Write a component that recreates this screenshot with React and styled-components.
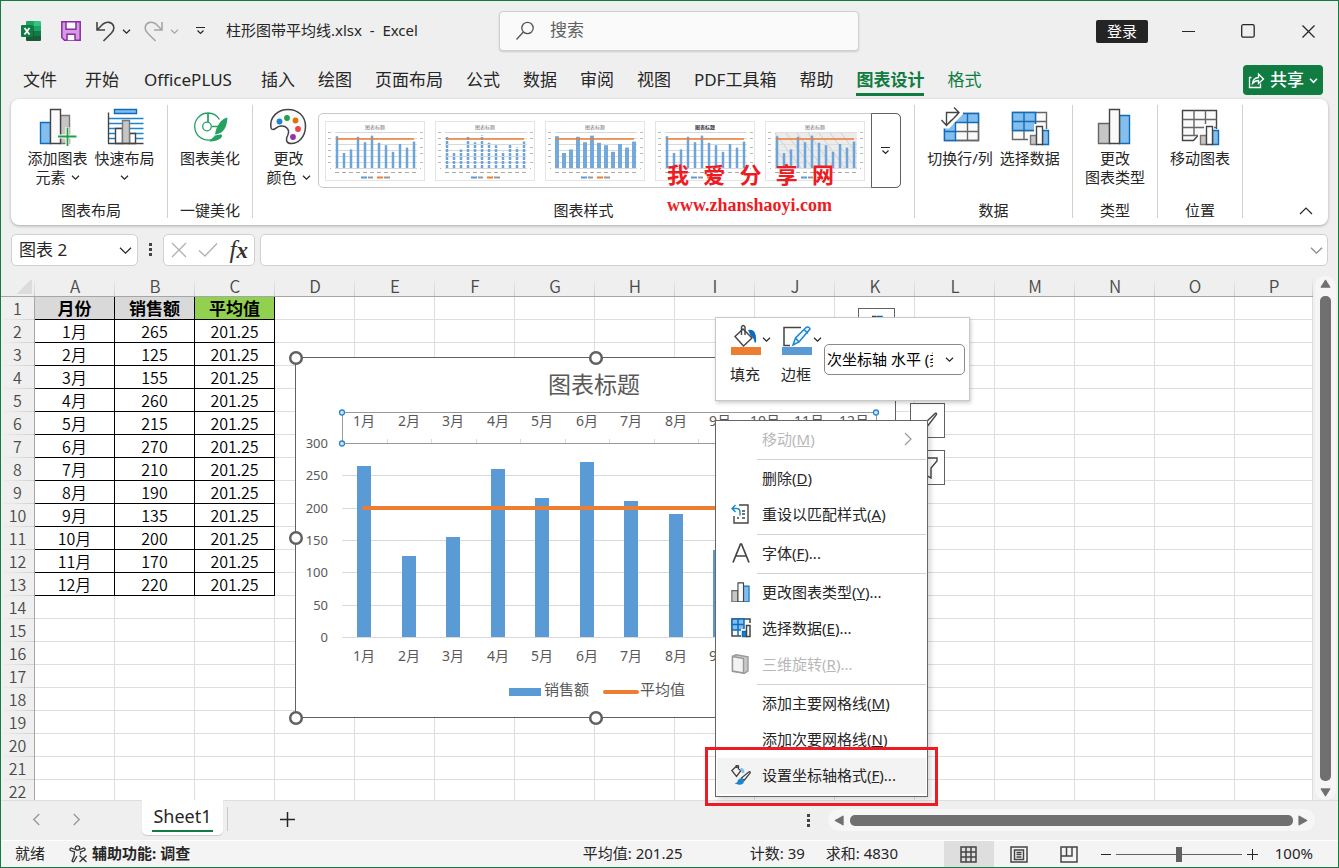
import React from "react";
import styled, { createGlobalStyle, css } from "styled-components";

const GREEN = "#107c41";
const INK = "#262626";
const BLUE = "#5b9bd5";
const ORANGE = "#ed7d31";

const Global = createGlobalStyle`
  *, *::before, *::after { box-sizing: border-box; }
  body { margin: 0; color: ${INK}; font: 15px/19px "Noto Sans", "Noto Sans CJK SC", sans-serif; }
  button, input, select { font: inherit; color: inherit; margin: 0; padding: 0; border: 0; background: none; }
  button { white-space: nowrap; }
  svg { display: block; flex: none; }
`;

const Window = styled.div`
  display: flex;
  flex-direction: column;
  height: 100vh;
  overflow: hidden;
  border: 1px solid ${GREEN};
  background: #efefef;
`;

/* ---------- Title bar ---------- */
const TitleBar = styled.header`
  display: grid;
  grid-template-columns: 498px minmax(200px, 360px) 1fr;
  align-items: center;
  height: 60px;
`;
const QuickAccess = styled.div`
  display: flex;
  align-items: center;
  padding-left: 20px;
`;
const QuickButton = styled.button`
  display: flex;
  align-items: center;
  height: 24px;
  margin-right: ${(p) => p.$after || 0}px;
`;
const FileName = styled.span`
  padding-bottom: 2px;
`;
const SearchBox = styled.label`
  display: flex;
  align-items: center;
  gap: 15px;
  height: 40px;
  padding: 0 15px;
  border: 1px solid #d0d0d0;
  border-radius: 4px;
  background: #fafafa;
  box-shadow: 0 1px 2px #00000026;
  input { flex: 1; min-width: 0; padding-bottom: 3px; font-size: 17px; outline: 0; }
  input::placeholder { color: #616161; opacity: 1; }
`;
const WindowControls = styled.div`
  display: flex;
  align-items: center;
  justify-content: flex-end;
`;
const SignIn = styled.button`
  width: 52px;
  height: 23px;
  margin-right: 10px;
  border-radius: 2px;
  background: #242424;
  color: #fff;
`;
const ControlButton = styled.button`
  display: grid;
  place-items: center;
  width: 60px;
  height: 40px;
`;

/* ---------- Ribbon ---------- */
const TabBar = styled.nav`
  display: flex;
  align-items: center;
  height: 38px;
  padding: 0 15px 0 22px;
`;
const Tab = styled.button`
  height: 31px;
  margin-right: 23px;
  padding-top: 2px;
  border-bottom: 3px solid ${(p) => (p.$active ? GREEN : "transparent")};
  font-size: 17px;
  line-height: 26px;
  color: ${(p) => (p.$chart ? GREEN : INK)};
  font-weight: ${(p) => (p.$active ? 700 : 400)};
`;
const FileTab = styled(Tab)`
  margin-right: 28px;
`;
const AddInTab = styled(Tab)`
  margin-right: 27px;
  padding: 2px 2px 0;
`;
const Share = styled.button`
  display: flex;
  align-items: center;
  justify-content: space-between;
  width: 80px;
  height: 30px;
  margin-left: auto;
  padding: 0 5px;
  border-radius: 4px;
  background: ${GREEN};
  color: #fff;
  font-size: 17px;
  font-weight: 500;
  line-height: 28px;
`;
const Ribbon = styled.section`
  display: flex;
  flex: none;
  height: 126px;
  margin: 0 10px;
  padding: 6px 0 7px;
  border-radius: 8px;
  background: #fff;
  box-shadow: 0 1px 3px #0000004d;
`;
const Group = styled.div`
  display: flex;
  flex-direction: column;
  flex: none;
  width: ${(p) => p.$w}px;
  padding-left: ${(p) => p.$inset || 0}px;
  border-right: 1px solid #d1d1d1;
`;
const GroupBody = styled.div`
  display: flex;
  flex: 1;
  justify-content: center;
  align-items: flex-start;
  gap: 1px;
  padding-top: 2px;
`;
const GroupLabel = styled.div`
  height: 17px;
  text-align: center;
`;
const BigButton = styled.button`
  display: flex;
  flex-direction: column;
  align-items: center;
  padding: 0 3px;
  svg + span { margin-top: 2px; }
  span { display: flex; align-items: center; gap: 5px; height: 19px; }
`;
const RibbonEnd = styled.div`
  display: flex;
  flex: 1;
  justify-content: flex-end;
  align-items: flex-end;
  padding: 0 15px 0;
`;
const Gallery = styled.div`
  display: flex;
  align-items: center;
  height: 75px;
  margin: 6px 3px 0 3px;
  padding-left: 6px;
  gap: 10px;
  border: 1px solid #c8c8c8;
  border-radius: 5px;
`;
const Thumb = styled.button`
  width: 100px;
  height: 60px;
  border: 1px solid #e4e4e4;
`;
const GalleryMore = styled.button`
  display: grid;
  place-items: center;
  width: 30px;
  height: 75px;
  margin: 0 -1px 0 -4px;
  border: 1px solid #616161;
  border-radius: 0 5px 5px 0;
`;
const Watermark = styled.div`
  position: absolute;
  left: 667px;
  top: 161px;
  width: 167px;
  color: #ed1c24;
  font-weight: 700;
  div { display: flex; justify-content: space-between; font-size: 22px; line-height: 26px; }
  p { margin: 8px 0 0; font: 700 18px/20px "Liberation Serif", serif; }
`;

/* ---------- Formula bar ---------- */
const FormulaBar = styled.div`
  display: flex;
  flex: none;
  height: 32px;
  margin: 9px 10px 10px;
`;
const Field = styled.div`
  display: flex;
  align-items: center;
  border: 1px solid #d0d0d0;
  border-radius: 5px;
  background: #fff;
  input { flex: 1; min-width: 0; height: 100%; padding: 0 7px 3px; font-size: 17px; outline: 0; }
`;
const NameBox = styled(Field)`
  width: 127px;
  padding-right: 5px;
`;
const FormulaTools = styled(Field)`
  width: 92px;
  justify-content: space-between;
  padding: 0 6px 0 7px;
`;
const FormulaInput = styled(Field)`
  flex: 1;
  margin-left: 5px;
  padding-right: 4px;
`;
const Dots = styled.div`
  display: grid;
  place-items: center;
  width: 25px;
`;
const FxText = styled.span`
  font: italic 400 25px/24px "Liberation Serif", serif;
  color: #333;
  b { font-size: 23px; }
`;

/* ---------- Sheet ---------- */
const SheetArea = styled.main`
  position: relative;
  display: flex;
  flex: 1;
  min-height: 0;
`;
const GridClip = styled.div`
  flex: 1;
  min-width: 0;
  margin-top: -4px;
  padding-top: 4px;
  overflow: hidden;
`;
const Grid = styled.table`
  width: 100%;
  table-layout: fixed;
  border-collapse: separate;
  border-spacing: 0;
  font-family: "Noto Sans CJK SC", sans-serif;
  font-size: 16px;
  font-weight: 350;
  line-height: 20px;
  background: #fff;
  th { padding: 0 0 1px; font-weight: 350; color: #4a4a4a; background: #efefef; }
  thead th {
    height: 21px;
    padding: 0;
    font-size: 17px;
    border-bottom: 1px solid #a6a6a6;
    background: linear-gradient(#efefef, #d0d0d0) right / 1px 100% no-repeat #efefef;
  }
  tbody th {
    height: 23px;
    border-right: 1px solid #a6a6a6;
    background: linear-gradient(90deg, #efefef, #d0d0d0) bottom / 100% 1px no-repeat #efefef;
  }
  col:first-child { width: 34px; }
`;
const Column = styled.col`
  width: ${(p) => (p.$last ? "auto" : "80px")};
`;
const Cell = styled.td`
  height: 23px;
  padding: 0;
  border: solid #dedede;
  border-width: 0 1px 1px 0;
  text-align: center;
  ${(p) => p.$data && css`border-color: #000; color: #000;`}
  ${(p) => p.$head && css`background: ${p.$head}; font-weight: 700; font-size: 17px;`}
`;
const Corner = styled.div`
  width: 15px;
  height: 15px;
  margin: 0 3px 0 auto;
  background: linear-gradient(135deg, transparent 50%, #dcdcdc 50%);
`;
const VScroll = styled.div`
  display: flex;
  flex-direction: column;
  align-items: center;
  gap: 6px;
  width: 21px;
  margin: 0 2px;
  padding: 3px 0 2px;
  border-radius: 10px;
  background: #f6f6f6;
  i { flex: 1; width: 11px; border-radius: 5px; background: #707070; }
`;

/* ---------- Objects that float over the cells ---------- */
const ChartObject = styled.svg`
  position: absolute;
  left: 285px;
  top: 72px;
  text { font-family: "Noto Sans", "Noto Sans CJK SC", sans-serif; fill: #595959; }
`;
const SideButton = styled.button`
  position: absolute;
  left: ${(p) => p.$x}px;
  top: ${(p) => p.$y}px;
  display: grid;
  place-items: center;
  width: ${(p) => p.$w || 35}px;
  height: 35px;
  border: 1px solid #616161;
  background: #fff;
`;
const MiniToolbar = styled.div`
  position: absolute;
  left: 714px;
  top: 41px;
  display: flex;
  width: 255px;
  height: 84px;
  padding: 6px 4px 0 14px;
  border: 1px solid #c8c8c8;
  background: #fff;
  box-shadow: 1px 2px 4px #00000033;
`;
const ColorTool = styled.button`
  display: grid;
  grid-template-columns: 32px 19px;
  grid-template-rows: 31px 39px;
  width: 51px;
  height: 70px;
  align-items: center;
  text-align: left;
`;
const AxisSelect = styled.label`
  display: flex;
  align-items: center;
  width: 141px;
  height: 31px;
  margin: 20px 0 0 -8px;
  padding-right: 10px;
  border: 1px solid #8a8a8a;
  border-radius: 5px;
  select { flex: 1; min-width: 0; height: 27px; margin-right: 12px; padding-left: 2px; appearance: none; outline: 0; text-overflow: clip; color: #000; }
`;
const Menu = styled.div`
  position: absolute;
  left: 714px;
  top: 144px;
  width: 213px;
  padding: 1px 1px 2px;
  border: 1px solid #666;
  background: #fff;
  box-shadow: 3px 3px 5px #00000026;
`;
const MenuItem = styled.button`
  display: grid;
  grid-template-columns: 20px 1fr auto;
  align-items: center;
  gap: 11px;
  width: 100%;
  height: 36px;
  padding: 0 11px 2px 14px;
  text-align: left;
  color: ${(p) => (p.disabled ? "#b8b8b8" : "#262626")};
  background: ${(p) => (p.$hot ? "#f3f3f3" : "none")};
`;
const MenuRule = styled.hr`
  height: 1px;
  margin: 1px 0 1px 40px;
  border: 0;
  background: #d1d1d1;
`;
const Highlight = styled.div`
  position: absolute;
  left: 704px;
  top: 471px;
  width: 233px;
  height: 59px;
  border: 3px solid #ed1c24;
  pointer-events: none;
  z-index: 2;
`;

/* ---------- Sheet tabs and status bar ---------- */
const SheetBar = styled.div`
  display: flex;
  flex: none;
  height: 40px;
  border-top: 1px solid #dedede;
`;
const SheetNav = styled.div`
  display: flex;
  align-items: center;
  gap: 27px;
  width: 141px;
  padding: 0 0 2px 29px;
`;
const IconButton = styled.button`
  display: grid;
  place-items: center;
`;
const SheetTab = styled.button`
  width: 81px;
  height: 35px;
  margin-top: -1px;
  padding: 0 10px 2px;
  border-radius: 0 0 5px 5px;
  background: #fff;
  box-shadow: 0 1px 1px #00000026;
  font-size: 18px;
  line-height: 28px;
  span { display: block; border-bottom: 2px solid ${GREEN}; }
`;
const NewSheet = styled(IconButton)`
  width: 120px;
  height: 24px;
  margin: 6px auto 0 4px;
  border-left: 1px solid #c8c8c8;
`;
const HScroll = styled.div`
  display: flex;
  align-items: center;
  gap: 5px;
  flex: 0 1 487px;
  height: 22px;
  margin: 8px 23px 0 7px;
  padding: 0 6px;
  border-radius: 11px;
  background: #f6f6f6;
  i { flex: 1; height: 11px; border-radius: 5px; background: #707070; }
`;
const StatusBar = styled.footer`
  display: flex;
  flex: none;
  align-items: center;
  height: 27px;
  padding: 0 25px 0 14px;
  border-top: 1px solid #fff;
  background: #f4f4f4;
`;
const StatusText = styled.span`
  flex: none;
  width: ${(p) => (p.$w ? `${p.$w}px` : "auto")};
  padding-bottom: 2px;
`;
const A11y = styled.button`
  display: flex;
  align-items: center;
  gap: 4px;
  margin: 0 auto 0 24px;
  font-weight: 700;
`;
const ViewButton = styled(IconButton)`
  width: 50px;
  height: 26px;
  background: ${(p) => (p.$on ? "#dedede" : "none")};
`;
const Zoom = styled.div`
  display: flex;
  align-items: center;
  gap: 5px;
  margin: 0 17px 0 6px;
  input { width: 126px; height: 20px; appearance: none; background: linear-gradient(#616161, #616161) center / 100% 1px no-repeat; }
  input::-webkit-slider-thumb { appearance: none; width: 6px; height: 15px; background: #616161; }
`;

/* ---------- Icons ---------- */
const Chevron = ({ s = 7, c = INK, w = 1.2, dir = "down" }) => {
  const turn = { down: 0, left: 90, up: 180, right: 270 }[dir];
  const h = s / 2;
  return (
    <svg width={s + 2} height={s + 2} viewBox={`${-h - 1} ${-h - 1} ${s + 2} ${s + 2}`} fill="none" stroke={c} strokeWidth={w}>
      <path transform={`rotate(${turn})`} d={`M${-h} ${-h / 2}L0 ${h / 2}L${h} ${-h / 2}`} />
    </svg>
  );
};
const MoreIcon = () => (
  <svg width="11" height="10" viewBox="0 0 11 10" fill="none" stroke={INK} strokeWidth="1.2"><path d="M1 1.500h9M2.500 4.500l3 3 3-3" /></svg>
);
const Arrow = ({ dir }) => {
  const d = { up: "M6 1L11 9H1z", down: "M6 10L11 2H1z", left: "M1 6L10 1V11z", right: "M10 6L1 1V11z" }[dir];
  return <svg width="11" height="11" viewBox="0 0 12 12"><path d={d} fill="#707070" stroke="#707070" strokeLinejoin="round" /></svg>;
};
const DotsIcon = () => (
  <svg width="4" height="16" viewBox="0 0 4 16" fill="#444"><path d="M0 1h3v3H0zM0 6h3v3H0zM0 11h3v3H0z" /></svg>
);
const ExcelIcon = () => (
  <svg width="20" height="20" viewBox="0 0 20 20">
    <path d="M6 0h7v5H5V1q0-1 1-1" fill="#21a366" /><path d="M13 0h6q1 0 1 1v4h-7z" fill="#33c481" />
    <path d="M5 5h8v5H5z" fill="#107c41" /><path d="M13 5h7v5h-7z" fill="#21a366" />
    <path d="M5 10h8v5H5z" fill="#185c37" /><path d="M13 10h7v5h-7z" fill="#107c41" />
    <path d="M5 15h15v4q0 1-1 1H6q-1 0-1-1z" fill="#185c37" />
    <rect y="4" width="12" height="12" rx="1" fill="#107c41" />
    <path d="M3.500 7l5 6.500M8.500 7l-5 6.500" stroke="#fff" strokeWidth="1.800" />
  </svg>
);
const SaveIcon = () => (
  <svg width="20" height="20" viewBox="0 0 20 20" stroke="#8a2da5" strokeWidth="1.500">
    <path d="M.8.8h18.400v18.400H3.500L.8 16.500z" fill="#d59ae0" /><path d="M5 .8h10v7.400H5z" fill="#fafafa" /><path d="M6 19.200v-6h8v6" fill="#fafafa" />
  </svg>
);
const UndoIcon = ({ c = "#444", flip }) => (
  <svg width="19" height="21" viewBox="0 0 19 21" fill="none" stroke={c} strokeWidth="1.600">
    <path transform={flip ? "matrix(-1 0 0 1 19 0)" : undefined} d="M1 1v8h8M1.300 8.700L7 3C11 0 16 1 17.500 5c1 3 0 5-2 7L7.500 20" />
  </svg>
);
const SearchIcon = () => (
  <svg width="20" height="20" viewBox="0 0 20 20" fill="none" stroke="#555" strokeWidth="1.300"><circle cx="12.500" cy="7" r="5.700" /><path d="M8.300 11L1.500 18.500" /></svg>
);
const Bars = ({ x, y }) => (
  <g transform={`translate(${x} ${y})`} strokeWidth="1.400">
    <path d="M-2 20V8h6V-2h10V3h6v17" fill="#fff" stroke="none" />
    <path d="M.5 9.500h6v9h-6z" fill="#c8c6c4" stroke="#777" /><path d="M12.500 4.500h6v14h-6z" fill="#83beec" stroke="#0f6cbd" /><path d="M6.500.5h6v18h-6z" fill="#fff" stroke="#444" />
  </g>
);
const AddElementIcon = () => (
  <svg width="40" height="40" viewBox="0 0 40 40" strokeWidth="1.400">
    <path d="M3.500 15.500h10v21h-10z" fill="#83beec" stroke="#0f6cbd" /><path d="M23.500 8.500h9v28h-9z" fill="#c8c6c4" stroke="#777" />
    <path d="M13.500 2.500h10v34h-10z" fill="#fafafa" stroke="#444" /><path d="M21 29.500h19M30.500 20v19" stroke="#fff" strokeWidth="4" />
    <path d="M21 29.500h18.500M30.500 20.500v18.500" stroke="#23a045" strokeWidth="1.800" />
  </svg>
);
const QuickLayoutIcon = () => (
  <svg width="40" height="40" viewBox="0 0 40 40" strokeWidth="1.400">
    <path d="M4 11.500h34.500M4 16.500h34.500M4 21.500h34.500M4 26.500h34.500M4 31.500h34.500" stroke="#1a86d0" />
    <path d="M9.500 2.500h22v4h-22z" fill="#83beec" stroke="#0f6cbd" /><path d="M3.500 5.500v31" stroke="#444" />
    <path d="M10.500 21.500h7v15h-7zM24.500 26.500h6v10h-6z" fill="#fff" stroke="#444" /><path d="M17.500 13.500h7v23h-7z" fill="#c8c6c4" stroke="#777" /><path d="M3 36.500h35.500" stroke="#444" />
  </svg>
);
const BeautifyIcon = () => (
  <svg width="40" height="40" viewBox="0 0 40 40" fill="none" stroke="#25a162" strokeWidth="1.300">
    <path d="M18 6A13.500 13.500 0 1 0 22.500 32.300M18 15V6A13.500 13.500 0 0 1 29.500 12.500M22 19.500h7" />
    <circle cx="17" cy="19.500" r="4.300" />
    <path d="M18 6v9" />
    <path d="M37.500 10.500C31 12 26 19 25 28c4-1 9-3 11-9 1-3 1-5 1.500-8.500zM24.500 29L19 34.500c5 0 11-1 13-5 1-3-4-3-8-.5z" fill="#25a162" stroke="none" />
    <path d="M25 28L30 27" stroke="#fff" strokeWidth=".8" />
  </svg>
);
const PaletteIcon = () => (
  <svg width="40" height="40" viewBox="0 0 40 40">
    <path d="M3 21C1 10 10 2.500 20 2.500S37.500 9 37.500 19.500 30 36.500 23.500 36.500c-6.500 0-5.500-5-3.500-9 2-5-2-9-7-8.500-5 .5-5 3.500-8 3.500Q3.200 22.500 3 21z" fill="#fafafa" stroke="#444" strokeWidth="1.500" />
    <circle cx="11.500" cy="14.500" r="2.900" fill="#1a86d0" /><circle cx="19" cy="11" r="2.900" fill="#23a045" /><circle cx="27.500" cy="13.500" r="2.900" fill="#e07000" /><circle cx="30" cy="22" r="2.900" fill="#f0403f" /><circle cx="25" cy="30" r="2.900" fill="#9232a8" />
  </svg>
);
const SwitchIcon = () => (
  <svg width="40" height="40" viewBox="0 0 40 40" strokeWidth="1.400">
    <path d="M4.500 6.500h34v27h-34z" fill="#fafafa" stroke="#666" /><path d="M15.500 6.500h23v9h-23zM4.500 15.500h11v18h-11z" fill="#83beec" />
    <path d="M15.500 24.500h23M27.500 15.500v18M38.500 15.500v18h-23" stroke="#666" fill="none" />
    <path d="M15.500 15.500V6.500h23v9h-34v18h11v-18M27.500 6.500v9M4.500 24.500h11" fill="none" stroke="#0f6cbd" />
    <path d="M0 0h23v7L9 21.500H0z" fill="#fff" /><path d="M6.500 18V5.500h12M1.500 13l5 5.500 5-5.500M14 .5l5 5-5 5.500M8.500 16.500L17.500 7.500" fill="none" stroke="#444" />
  </svg>
);
const SelectDataIcon = () => (
  <svg width="40" height="40" viewBox="0 0 40 40" strokeWidth="1.400">
    <path d="M2.500 5.500h34v27h-34zM2.500 23.500h34M25.500 14.500h11M14 23v9.500M25.500 5.500v27" fill="#fafafa" stroke="#666" />
    <path d="M2.500 5.500h23v18h-23zM2.500 14.500h23M14 5.500v18" fill="#83beec" stroke="#0f6cbd" /><Bars x={20} y={19} />
  </svg>
);
const ChartTypeIcon = ({ size = 40 }) => (
  <svg width={size} height={size} viewBox={size === 40 ? "0 0 40 40" : "2 1 36 36"} strokeWidth={size === 40 ? 1.4 : 2}>
    <path d="M3.500 16.500h11v20h-11z" fill="#c8c6c4" stroke="#666" /><path d="M24.500 8.500h10v28h-10z" fill="#83beec" stroke="#0f6cbd" /><path d="M14.500 2.500h10v34h-10z" fill="#fafafa" stroke="#444" />
  </svg>
);
const MoveIcon = () => (
  <svg width="40" height="40" viewBox="0 0 40 40" fill="#fafafa" stroke="#444" strokeWidth="1.400">
    <path d="M2.500 3.500h34v25H18l-4.500 5h-11z" /><path d="M2.500 12.500h34M2.500 20.500h34M2.500 28.500h16M14 3.500v25M25.500 3.500v25" stroke="#666" /><Bars x={20} y={19} />
  </svg>
);
const BucketIcon = () => (
  <svg width="32" height="31" viewBox="0 0 32 31" fill="none" stroke="#444" strokeWidth="1.400">
    <path d="M5 12.500L13 5l9 9-8.500 8z" fill="#fff" /><path d="M11.500 11V3q1.500-3 3.500 0v8" /><path d="M18 6q9-2 8 12.500h-1.500q-.5-5-3.500-6z" fill="#0f6cbd" stroke="none" />
    <path d="M1 23h30v8H1z" fill={ORANGE} stroke="none" />
  </svg>
);
const OutlineIcon = () => (
  <svg width="32" height="31" viewBox="0 0 32 31" fill="none" stroke="#444" strokeWidth="1.500">
    <path d="M20 3.500H3v18h6" /><path d="M12 21l2.500-7L25 3.500q3-1.500 4 1.500L18 18zM14.500 14l3.500 4M23 5.500l4 4" stroke="#1a86d0" fill="#eaf5fd" />
    <path d="M1 23h30v8H1z" fill={BLUE} stroke="none" />
  </svg>
);
const ResetIcon = () => (
  <svg width="20" height="21" viewBox="0 0 20 21" fill="none" stroke="#444" strokeWidth="1.400"><path d="M8 1h9v18H3v-7M6 14h2M11 10h3M11 14h3M11 7h3" /><path d="M4.500 1L1 4.500 4.500 8M1 4.500h5q3 0 3 4v3" stroke="#1a86d0" /></svg>
);
const SmallDataIcon = () => (
  <svg width="20" height="20" viewBox="0 0 20 20" fill="#fafafa" stroke="#444" strokeWidth="1.500">
    <path d="M1 1h18v17H1z" /><path d="M1 1h12v11H1zM1 6.500h12M7 1v17" fill="#83beec" stroke="#0f6cbd" /><path d="M10 20V11h4V5h6v15z" fill="#fff" stroke="none" /><path d="M11.500 13.500h4v5h-4z" fill="#1a86d0" stroke="#0f6cbd" /><path d="M15.500 7.500h3.500v11h-3.500z" />
  </svg>
);
const RotateIcon = () => (
  <svg width="20" height="20" viewBox="0 0 20 20" stroke="#999" strokeWidth="1.400"><path d="M1.500 2.500L5 .8l12 2v14l-3.500 2.500-12-2z" fill="#c8c8c8" /><path d="M1.500 2.500l11 2v14.500l-11-2z" fill="#f3f3f3" /></svg>
);
const FontIcon = () => (
  <svg width="20" height="20" viewBox="0 0 20 20" fill="none" stroke="#444" strokeWidth="1.700"><path d="M2 19.500L9.500 1h1L18 19.500M4.500 13h11" /></svg>
);
const FormatIcon = () => (
  <svg width="20" height="20" viewBox="0 0 20 20" fill="none" stroke="#444" strokeWidth="1.300"><path d="M.8 5.500L5.500 1.200l4.300 4.500L5.500 11.500zM5 3V1q1.500-1.500 2.500 0v3.500" /><path d="M9.500 4q3 .5 2.500 4" stroke="#83beec" strokeWidth="2.500" /><path d="M10.500 13l7.500-6.200q1.800-.3 1 1.400L13 15.500z" fill="#fafafa" /><path d="M3.500 18.500q3-.5 3.500-3.500 3-3.500 6 0 .5 5-5 4.800z" fill="#1a86d0" stroke="none" /></svg>
);
const A11yIcon = () => (
  <svg width="19" height="18" viewBox="0 0 19 18" fill="none" stroke="#333" strokeWidth="1.300"><circle cx="8.500" cy="3" r="2.200" /><path d="M6 4.500L2 3Q0 4 1.500 5.500L5.500 7 5 11l-2 5q1 1.500 2.200 0L8 11M11 4.500L15 3q2 1 .5 2.500L11.500 7v2.500M10.500 10.500l7 6.500M17.500 10.500l-7 6.500" /></svg>
);

/* ---------- Charts ---------- */
const SALES = [265, 125, 155, 260, 215, 270, 210, 190, 135, 200, 170, 220];
const MONTHS = SALES.map((_, i) => `${i + 1}月`);

const ThumbChart = ({ wide, dashed, hatch, bold }) => (
  <svg width="98" height="58" viewBox="0 0 98 58">
    {hatch && <path d="M9 11h82v35H9z" fill="#ececec" />}
    {hatch && <path d="M9 26l15 20M9 11l26 35M20 11l26 35M31 11l26 35M42 11l26 35M53 11l26 35M64 11l26 35M75 11l16 21" stroke="#cfcfcf" />}
    <path d="M9 10.500h82M9 16.500h82M9 22.500h82M9 28.500h82M9 34.500h82M9 40.500h82M9 46.500h82" stroke={hatch ? "#ddd" : "#d8d8d8"} />
    <path d="M2 10.500h3M2 16.500h3M2 22.500h3M2 28.500h3M2 34.500h3M2 40.500h3M4 46.500h1M94 10.500h3M94 16.500h3M94 25.500h3M94 31.500h3M94 40.500h3M94 46.500h1" stroke="#b8b8b8" />
    <text x="49" y="7" fontSize="5" textAnchor="middle" fill={bold ? "#334" : "#777"} fontWeight={bold ? 700 : 400}>图表标题</text>
    {SALES.map((v, i) => (
      <path key={i} d={`M${11 + i * 7} 46V${46 - v * 0.12}`} stroke={wide ? "#74a9db" : "#6ba5dc"} strokeWidth={wide ? 4 : 2.5} strokeDasharray={dashed ? "3 1" : undefined} />
    ))}
    <path d="M9 50.500h82" stroke="#aaa" strokeDasharray="4 3" />
    <path d="M10 17h78" stroke={ORANGE} strokeWidth="1.800" opacity=".75" />
    <path d="M35 55.500h6" stroke={BLUE} strokeWidth="2" /><path d="M51 55.500h6" stroke={ORANGE} strokeWidth="2" /><path d="M42 55.500h5M58 55.500h6" stroke="#999" strokeWidth="2" />
  </svg>
);

const AXIS = { left: 56, right: 590, top: 95, bottom: 289 };
const STEP = (AXIS.right - AXIS.left) / 12;
const yOf = (v) => Math.round(AXIS.bottom - (v * (AXIS.bottom - AXIS.top)) / 300);
const xOf = (i) => Math.round(AXIS.left + STEP * (i + 0.5));

const MainChart = () => (
  <ChartObject width="620" height="380" viewBox="0 0 620 380" role="img" aria-label="图表标题">
    <path d="M9.500 9.500h600v360h-600z" fill="#fff" stroke="#616161" />
    <text x="308" y="45" fontSize="23" textAnchor="middle">图表标题</text>
    {[0, 50, 100, 150, 200, 250, 300].map((v) => (
      <g key={v}>
        <path d={`M${AXIS.left} ${yOf(v) + 0.5}H${AXIS.right}`} stroke="#d9d9d9" />
        <text x="42" y={yOf(v) + 5} fontSize="13" textAnchor="end">{v}</text>
      </g>
    ))}
    {SALES.map((v, i) => <rect key={i} x={xOf(i) - 7} y={yOf(v)} width="14" height={AXIS.bottom - yOf(v)} fill={BLUE} />)}
    <path d={`M${xOf(0)} 160H${xOf(11)}`} stroke={ORANGE} strokeWidth="4" strokeLinecap="round" />
    {MONTHS.map((m, i) => (
      <g key={m} fontSize="14" textAnchor="middle">
        <text x={xOf(i)} y="78">{m}</text>
        <text x={xOf(i)} y="313">{m}</text>
        <path d={`M${Math.round(AXIS.left + STEP * i) + 0.5} 91v4`} stroke="#d9d9d9" />
      </g>
    ))}
    <path d="M56.500 64.500h534v31h-534z" fill="none" stroke="#999" />
    {[[56, 64], [56, 95], [590, 64], [590, 95]].map(([x, y]) => <circle key={`${x}-${y}`} cx={x} cy={y + 0.5} r="2.500" fill="#cfe6f8" stroke="#2a86cf" strokeWidth="1.300" />)}
    <path d="M223 340h32v8h-32z" fill={BLUE} /><text x="258" y="347" fontSize="15">销售额</text>
    <path d="M319 344h32" stroke={ORANGE} strokeWidth="4" strokeLinecap="round" /><text x="354" y="347" fontSize="15">平均值</text>
    {[[10, 10], [310, 10], [610, 10], [10, 190], [610, 190], [10, 370], [310, 370], [610, 370]].map(([x, y]) => (
      <circle key={`${x}-${y}`} cx={x} cy={y} r="5.800" fill="#fff" stroke="#616161" strokeWidth="2.500" />
    ))}
  </ChartObject>
);

/* ---------- Data ---------- */
const TABS = ["插入", "绘图", "页面布局", "公式", "数据", "审阅", "视图", "PDF工具箱", "帮助"];
const COLS = "ABCDEFGHIJKLMNOP".split("");
const ROWS = Array.from({ length: 22 }, (_, i) => i);
const HEADS = [["月份", "#d9d9d9"], ["销售额", "#d9d9d9"], ["平均值", "#92d050"]];
const cellText = (r, c) => {
  if (r > 12 || c > 2) return null;
  if (r === 0) return HEADS[c][0];
  return [MONTHS[r - 1], SALES[r - 1], "201.25"][c];
};
const MENU = [
  { t: "移动", k: "M", off: true, sub: true }, null,
  { t: "删除", k: "D" }, { t: "重设以匹配样式", k: "A", icon: <ResetIcon /> }, null,
  { t: "字体", k: "F", more: true, icon: <FontIcon /> }, null,
  { t: "更改图表类型", k: "Y", more: true, icon: <ChartTypeIcon size={20} /> },
  { t: "选择数据", k: "E", more: true, icon: <SmallDataIcon /> },
  { t: "三维旋转", k: "R", more: true, off: true, icon: <RotateIcon /> }, null,
  { t: "添加主要网格线", k: "M" }, { t: "添加次要网格线", k: "N" },
  { t: "设置坐标轴格式", k: "F", more: true, hot: true, icon: <FormatIcon /> },
];

const RibbonButton = ({ icon, lines, drop }) => (
  <BigButton>
    {icon}
    {lines.map((l, i) => <span key={i}>{l}{drop && i === lines.length - 1 && <Chevron />}</span>)}
  </BigButton>
);

export default function App() {
  return (
    <Window>
      <Global />
      <TitleBar>
        <QuickAccess>
          <QuickButton $after={20} aria-label="Excel"><ExcelIcon /></QuickButton>
          <QuickButton $after={15} aria-label="保存"><SaveIcon /></QuickButton>
          <QuickButton $after={7} aria-label="撤消"><UndoIcon /></QuickButton>
          <QuickButton $after={13} aria-label="撤消列表"><Chevron /></QuickButton>
          <QuickButton $after={7} aria-label="恢复"><UndoIcon c="#a6a6a6" flip /></QuickButton>
          <QuickButton $after={16} aria-label="恢复列表"><Chevron c="#a6a6a6" /></QuickButton>
          <QuickButton $after={20} aria-label="自定义"><MoreIcon /></QuickButton>
          <FileName>柱形图带平均线.xlsx &nbsp;- &nbsp;Excel</FileName>
        </QuickAccess>
        <SearchBox><SearchIcon /><input aria-label="搜索" placeholder="搜索" /></SearchBox>
        <WindowControls>
          <SignIn>登录</SignIn>
          <ControlButton aria-label="最小化"><svg width="13" height="13" stroke={INK}><path d="M0 6.500h13" /></svg></ControlButton>
          <ControlButton aria-label="最大化"><svg width="14" height="14" fill="none" stroke={INK} strokeWidth="1.300"><rect x=".7" y=".7" width="12.500" height="12.500" rx="1.500" /></svg></ControlButton>
          <ControlButton aria-label="关闭"><svg width="13" height="13" stroke={INK} strokeWidth="1.300"><path d="M.5.5l12 12M12.500.5l-12 12" /></svg></ControlButton>
        </WindowControls>
      </TitleBar>

      <TabBar>
        <FileTab>文件</FileTab>
        <Tab>开始</Tab>
        <AddInTab>OfficePLUS</AddInTab>
        {TABS.map((t) => <Tab key={t}>{t}</Tab>)}
        <Tab $chart $active>图表设计</Tab>
        <Tab $chart>格式</Tab>
        <Share>
          <svg width="17" height="17" viewBox="0 0 17 17" fill="none" stroke="#fff" strokeWidth="1.300"><path d="M3.500 5.500H1.500v10h11v-4M4.500 11.500Q5 6 10.500 5.500V2L15.500 7l-5 4.500V8.500Q7 8.500 4.500 11.500z" /></svg>
          共享<Chevron c="#fff" w={1.6} />
        </Share>
      </TabBar>

      <Ribbon>
        <Group $w={157} $inset={4}>
          <GroupBody>
            <RibbonButton icon={<AddElementIcon />} lines={["添加图表", "元素"]} drop />
            <RibbonButton icon={<QuickLayoutIcon />} lines={["快速布局", ""]} drop />
          </GroupBody>
          <GroupLabel>图表布局</GroupLabel>
        </Group>
        <Group $w={85}>
          <GroupBody><RibbonButton icon={<BeautifyIcon />} lines={["图表美化"]} /></GroupBody>
          <GroupLabel>一键美化</GroupLabel>
        </Group>
        <Group $w={662}>
          <GroupBody>
            <RibbonButton icon={<PaletteIcon />} lines={["更改", "颜色"]} drop />
            <Gallery>
              <Thumb aria-label="样式 1"><ThumbChart /></Thumb>
              <Thumb aria-label="样式 2"><ThumbChart dashed /></Thumb>
              <Thumb aria-label="样式 3"><ThumbChart wide /></Thumb>
              <Thumb aria-label="样式 4"><ThumbChart bold /></Thumb>
              <Thumb aria-label="样式 5"><ThumbChart hatch /></Thumb>
              <GalleryMore aria-label="其他"><MoreIcon /></GalleryMore>
            </Gallery>
          </GroupBody>
          <GroupLabel>图表样式</GroupLabel>
        </Group>
        <Group $w={158}>
          <GroupBody>
            <RibbonButton icon={<SwitchIcon />} lines={["切换行/列"]} />
            <RibbonButton icon={<SelectDataIcon />} lines={["选择数据"]} />
          </GroupBody>
          <GroupLabel>数据</GroupLabel>
        </Group>
        <Group $w={85}>
          <GroupBody><RibbonButton icon={<ChartTypeIcon />} lines={["更改", "图表类型"]} /></GroupBody>
          <GroupLabel>类型</GroupLabel>
        </Group>
        <Group $w={85}>
          <GroupBody><RibbonButton icon={<MoveIcon />} lines={["移动图表"]} /></GroupBody>
          <GroupLabel>位置</GroupLabel>
        </Group>
        <RibbonEnd><IconButton aria-label="折叠功能区"><Chevron dir="up" s={12} /></IconButton></RibbonEnd>
      </Ribbon>
      <Watermark>
        <div><span>我</span><span>爱</span><span>分</span><span>享</span><span>网</span></div>
        <p>www.zhanshaoyi.com</p>
      </Watermark>

      <FormulaBar>
        <NameBox><input aria-label="名称框" defaultValue="图表 2" /><IconButton aria-label="名称列表"><Chevron s={11} /></IconButton></NameBox>
        <Dots><DotsIcon /></Dots>
        <FormulaTools>
          <IconButton aria-label="取消"><svg width="16" height="16" stroke="#b0b0b0" strokeWidth="1.300"><path d="M1 1l14 14M15 1L1 15" /></svg></IconButton>
          <IconButton aria-label="输入"><svg width="20" height="16" fill="none" stroke="#b0b0b0" strokeWidth="1.300"><path d="M1 8.500l6 5.500L19 1.500" /></svg></IconButton>
          <IconButton aria-label="插入函数"><FxText>f<b>x</b></FxText></IconButton>
        </FormulaTools>
        <FormulaInput><input aria-label="编辑栏" /><IconButton aria-label="展开编辑栏"><Chevron s={11} c="#888" /></IconButton></FormulaInput>
      </FormulaBar>

      <SheetArea>
        <GridClip>
          <Grid>
            <colgroup><col />{COLS.map((c) => <Column key={c} $last={c === "P"} />)}</colgroup>
            <thead>
              <tr>
                <th aria-label="全选"><Corner /></th>
                {COLS.map((c) => <th key={c} scope="col">{c}</th>)}
              </tr>
            </thead>
            <tbody>
              {ROWS.map((r) => (
                <tr key={r}>
                  <th scope="row">{r + 1}</th>
                  {COLS.map((c, i) => (
                    <Cell key={c} $data={r < 13 && i < 3} $head={r === 0 && i < 3 ? HEADS[i][1] : null}>{cellText(r, i)}</Cell>
                  ))}
                </tr>
              ))}
            </tbody>
          </Grid>
        </GridClip>
        <VScroll><Arrow dir="up" /><i /><Arrow dir="down" /></VScroll>

        <MainChart />
        <SideButton $x={857} $y={32} $w={37} aria-label="布局选项"><svg width="18" height="21" fill="none" strokeWidth="1.500"><path d="M4 1.500h4" stroke="#444" /><path d="M9 1.500h5v4H9z" stroke="#0f6cbd" /></svg></SideButton>
        <SideButton $x={909} $y={80} aria-label="图表元素" />
        <SideButton $x={909} $y={127} aria-label="图表样式"><svg width="20" height="20" fill="none" stroke="#444" strokeWidth="1.400"><path d="M7 12L17 2.500q2-1 1.500 1L10 14.500zM7 12q-4 1-5 6 5 0 8-3.500" /></svg></SideButton>
        <SideButton $x={909} $y={174} aria-label="图表筛选器"><svg width="20" height="22" fill="none" stroke="#444" strokeWidth="1.400"><path d="M1 1h18v3l-6 7v10l-5-3v-7L1 4z" /></svg></SideButton>

        <MiniToolbar>
          <ColorTool><BucketIcon /><Chevron /><span>填充</span></ColorTool>
          <ColorTool><OutlineIcon /><Chevron /><span>边框</span></ColorTool>
          <AxisSelect>
            <select aria-label="图表元素" defaultValue="x"><option value="x">次坐标轴 水平 (类别)</option></select>
            <Chevron />
          </AxisSelect>
        </MiniToolbar>

        <Menu role="menu">
          {MENU.map((m, i) => m ? (
            <MenuItem key={i} role="menuitem" disabled={m.off} $hot={m.hot}>
              <span>{m.icon}</span>
              <span>{m.t}(<u>{m.k}</u>){m.more && "..."}</span>
              {m.sub && <Chevron dir="right" s={12} c="#999" />}
            </MenuItem>
          ) : <MenuRule key={i} />)}
        </Menu>
        <Highlight />
      </SheetArea>

      <SheetBar>
        <SheetNav>
          <IconButton aria-label="上一张"><Chevron dir="left" s={11} c="#999" w={1.4} /></IconButton>
          <IconButton aria-label="下一张"><Chevron dir="right" s={11} c="#999" w={1.4} /></IconButton>
        </SheetNav>
        <SheetTab><span>Sheet1</span></SheetTab>
        <NewSheet aria-label="新工作表"><svg width="15" height="15" stroke={INK} strokeWidth="1.500"><path d="M0 7.500h15M7.500 0v15" /></svg></NewSheet>
        <Dots><DotsIcon /></Dots>
        <HScroll><Arrow dir="left" /><i /><Arrow dir="right" /></HScroll>
      </SheetBar>

      <StatusBar>
        <StatusText>就绪</StatusText>
        <A11y><A11yIcon /><StatusText>辅助功能: 调查</StatusText></A11y>
        <StatusText $w={167}>平均值: 201.25</StatusText>
        <StatusText $w={76}>计数: 39</StatusText>
        <StatusText $w={118}>求和: 4830</StatusText>
        <ViewButton $on aria-label="普通"><svg width="17" height="17" fill="none" stroke="#444" strokeWidth="1.500"><path d="M1 1h15v15H1zM6 1v15M11 1v15M1 6h15M1 11h15" /></svg></ViewButton>
        <ViewButton aria-label="页面布局"><svg width="18" height="17" fill="none" stroke="#444" strokeWidth="1.500"><path d="M1 1h16v15H1zM4.500 4h9v9.500h-9zM6.500 6.500h5M6.500 8.500h5M6.500 11h5" /></svg></ViewButton>
        <ViewButton aria-label="分页预览"><svg width="18" height="17" fill="none" stroke="#444" strokeWidth="1.500"><path d="M1 1h16v15H1zM6.500 1v9M12 1v9H1" /></svg></ViewButton>
        <Zoom>
          <IconButton aria-label="缩小"><svg width="11" height="11" stroke={INK}><path d="M1 5.500h10" /></svg></IconButton>
          <input type="range" aria-label="缩放" defaultValue="50" />
          <IconButton aria-label="放大"><svg width="11" height="11" stroke={INK}><path d="M0 5.500h11M5.500 0v11" /></svg></IconButton>
        </Zoom>
        <StatusText>100%</StatusText>
      </StatusBar>
    </Window>
  );
}
